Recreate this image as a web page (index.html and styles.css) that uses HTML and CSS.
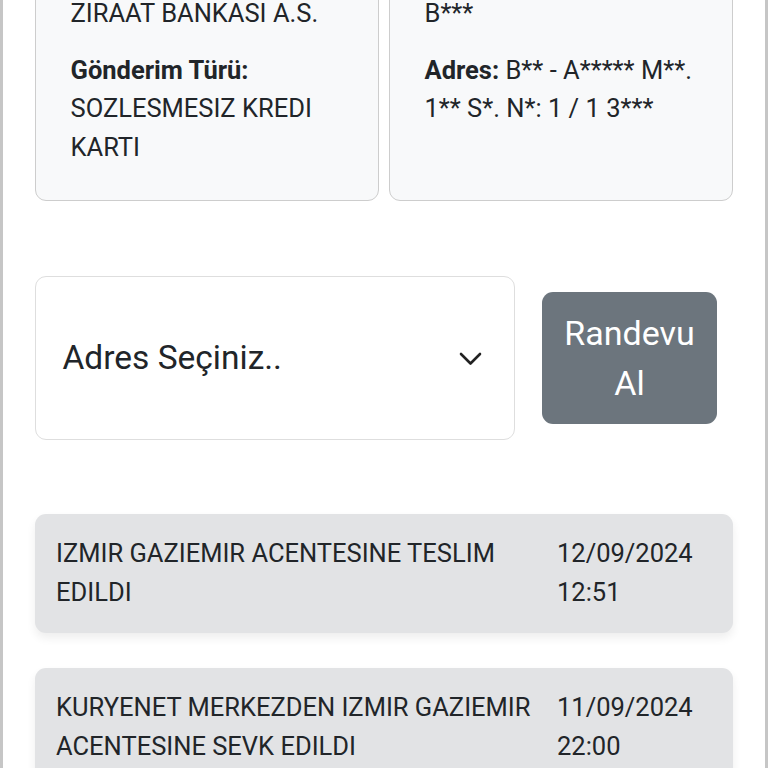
FILE: index.html
```html
<!DOCTYPE html>
<html lang="tr">
<head>
<meta charset="utf-8">
<title>Gönderi Takip</title>
<link rel="stylesheet" href="styles.css">
</head>
<body>
<div class="page">
  <div class="info-cards">
    <div class="info-card">
      <p><b>Gönderici:</b><br>ZIRAAT BANKASI A.S.</p>
      <p><b>Gönderim Türü:</b> SOZLESMESIZ KREDI KARTI</p>
    </div>
    <div class="info-card">
      <p><b>Alıcı:</b><br>B***</p>
      <p><b>Adres:</b> B** - A***** M**. 1** S*. N*: 1 / 1 3***</p>
    </div>
  </div>

  <div class="appointment">
    <div class="select-box">
      <span class="select-text">Adres Seçiniz..</span>
      <svg class="chevron" width="23" height="14" viewBox="0 0 23 14" aria-hidden="true">
        <polyline points="2,2 11.5,11.5 21,2" fill="none" stroke="#222" stroke-width="2.6" stroke-linecap="round" stroke-linejoin="round"/>
      </svg>
    </div>
    <button class="btn-appointment">Randevu Al</button>
  </div>

  <div class="timeline">
    <div class="event">
      <div class="event-text">IZMIR GAZIEMIR ACENTESINE TESLIM EDILDI</div>
      <div class="event-date">12/09/2024 12:51</div>
    </div>
    <div class="event">
      <div class="event-text">KURYENET MERKEZDEN IZMIR GAZIEMIR ACENTESINE SEVK EDILDI</div>
      <div class="event-date">11/09/2024 22:00</div>
    </div>
  </div>
</div>
</body>
</html>
```

FILE: styles.css
```css
* { box-sizing: border-box; }

html, body {
  margin: 0;
  padding: 0;
  background: #ffffff;
  height: 100%;
  overflow: hidden;
}

body {
  font-family: Roboto, "Liberation Sans", Arial, sans-serif;
  color: #212529;
  font-size: 25.5px;
  line-height: 38.5px;
}

.page {
  min-height: 100%;
  border-left: 3px solid #c6c6c6;
  border-right: 3px solid #c6c6c6;
  padding: 0 32px 40px;
}

.info-cards {
  display: grid;
  grid-template-columns: 1fr 1fr;
  column-gap: 10px;
  margin-top: -80px;
}

.info-card {
  background: #f8f9fa;
  border: 1.5px solid #cdcdcd;
  border-radius: 11px;
  padding: 34.5px 28px 34px 34.5px;
}

.info-card p {
  margin: 0 0 18px;
}

.info-card p:last-child {
  margin-bottom: 0;
}

.info-card b {
  font-weight: 700;
}

.appointment {
  display: flex;
  align-items: center;
  gap: 27px;
  margin-top: 75px;
}

.select-box {
  flex: 0 0 480px;
  height: 164px;
  background: #fff;
  border: 1.5px solid #dedede;
  border-radius: 11px;
  display: flex;
  align-items: center;
  justify-content: space-between;
  padding: 0 32px 0 26.5px;
}

.select-text {
  font-size: 33.5px;
  line-height: 44px;
  color: #212529;
}

.chevron {
  display: block;
  margin-top: 2px;
}

.btn-appointment {
  flex: 0 0 175px;
  height: 132px;
  background: #6c757d;
  color: #ffffff;
  border: none;
  border-radius: 11px;
  font-family: Roboto, "Liberation Sans", Arial, sans-serif;
  font-size: 34px;
  line-height: 50px;
  padding: 0 10px;
  text-align: center;
}

.timeline {
  display: flex;
  flex-direction: column;
  gap: 35px;
  margin-top: 74px;
}

.event {
  background: #e2e3e5;
  border-radius: 11px;
  box-shadow: 0 5px 10px rgba(0, 0, 0, 0.07);
  display: grid;
  grid-template-columns: 1fr 155px;
  column-gap: 12px;
  padding: 20px 21px 22px;
  line-height: 38.5px;
}
```
